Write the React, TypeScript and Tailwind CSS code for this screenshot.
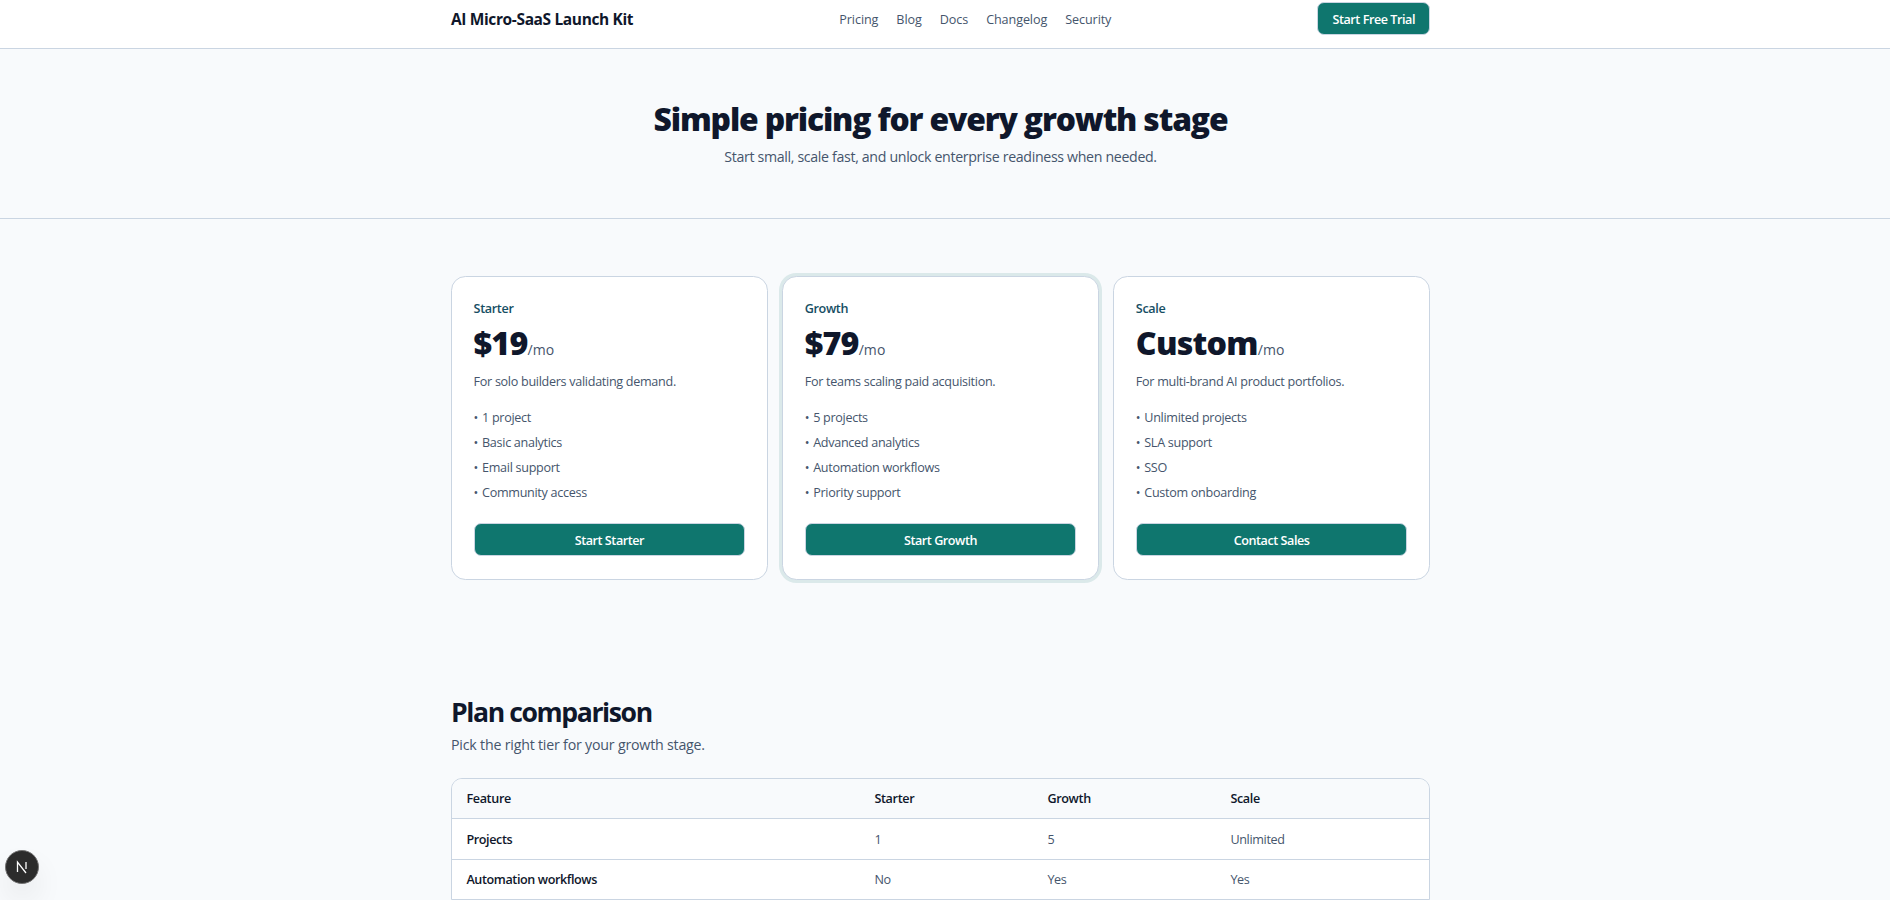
import clsx from "clsx";

const navLinks = ["Pricing", "Blog", "Docs", "Changelog", "Security"];

type Plan = {
  name: string;
  price: string;
  description: string;
  features: string[];
  cta: string;
  featured?: boolean;
};

const plans: Plan[] = [
  {
    name: "Starter",
    price: "$19",
    description: "For solo builders validating demand.",
    features: ["1 project", "Basic analytics", "Email support", "Community access"],
    cta: "Start Starter",
  },
  {
    name: "Growth",
    price: "$79",
    description: "For teams scaling paid acquisition.",
    features: ["5 projects", "Advanced analytics", "Automation workflows", "Priority support"],
    cta: "Start Growth",
    featured: true,
  },
  {
    name: "Scale",
    price: "Custom",
    description: "For multi-brand AI product portfolios.",
    features: ["Unlimited projects", "SLA support", "SSO", "Custom onboarding"],
    cta: "Contact Sales",
  },
];

const rows = [
  ["Projects", "1", "5", "Unlimited"],
  ["Automation workflows", "No", "Yes", "Yes"],
];

function PlanCard({ plan }: { plan: Plan }) {
  return (
    <article
      className={clsx(
        "rounded-[14.4px] border border-slate-300 bg-white px-6 pt-[23px] pb-[23px]",
        plan.featured && "ring-3 ring-[#0f766e]/12"
      )}
    >
      <p className="text-[12.6px] leading-[18px] font-semibold tracking-[-0.35px] text-[#164e63]">{plan.name}</p>
      <p className="mt-[7px] h-[36px] text-[32.2px] leading-[35px] font-extrabold tracking-[-0.8px] text-slate-900">
        {plan.price}
        <span className="text-[14px] font-medium tracking-[0.1px] text-slate-600">/mo</span>
      </p>
      <p className="mt-[12px] text-[12.6px] leading-[18px] tracking-[-0.3px] text-slate-600">{plan.description}</p>
      <ul className="mt-[18px] space-y-[7px] text-[12.6px] leading-[18px] tracking-[-0.3px] text-slate-600">
        {plan.features.map((f) => (
          <li key={f}>
            <span className="mr-px">•</span> {f}
          </li>
        ))}
      </ul>
      <button className="mt-[21px] block h-[33px] w-full rounded-[7px] border border-slate-300 bg-[#0f766e] pt-[2px] text-[12.6px] leading-[18px] font-semibold tracking-[-0.45px] text-white">
        {plan.cta}
      </button>
    </article>
  );
}

export default function App() {
  return (
    <div className="h-[900px] overflow-hidden bg-slate-50 font-['Open_Sans','Noto_Sans',sans-serif] text-slate-900 [--spacing:3.6px]">
      <header className="h-[49px] border-b border-slate-300 bg-white pr-[9px]">
        <div className="mx-auto flex h-[38px] w-[979px] items-center justify-between">
          <span className="pt-[2px] text-[15.5px] font-bold tracking-[-0.37px]">AI Micro-SaaS Launch Kit</span>
          <nav className="flex gap-5 pt-[2px] text-[12.6px] font-medium tracking-[-0.09px] text-slate-600">
            {navLinks.map((l) => (
              <a key={l}>{l}</a>
            ))}
          </nav>
          <button className="-mt-px h-[33px] w-[112.5px] rounded-[7px] border border-slate-300 bg-[#0f766e] pt-[2px] text-[12.6px] leading-[18px] font-semibold tracking-[-0.45px] text-white">
            Start Free Trial
          </button>
        </div>
      </header>

      <section className="h-[170px] border-b border-slate-300 pt-14 pr-[9px] text-center">
        <h1 className="text-[31.8px] leading-[39.6px] font-extrabold tracking-[-1.15px]">
          Simple pricing for every growth stage
        </h1>
        <p className="mt-2 text-[14.2px] leading-[21.6px] tracking-[-0.34px] text-slate-600">
          Start small, scale fast, and unlock enterprise readiness when needed.
        </p>
      </section>

      <section className="pt-[57px] pb-16 pr-[9px]">
        <div className="mx-auto grid w-[979px] grid-cols-3 gap-4">
          {plans.map((p) => (
            <PlanCard key={p.name} plan={p} />
          ))}
        </div>
      </section>

      <section className="pt-[58.6px] pr-[9px]">
        <div className="mx-auto w-[979px]">
          <h2 className="text-[26.6px] leading-[32.4px] font-bold tracking-[-1.4px]">Plan comparison</h2>
          <p className="mt-[5.2px] text-[14.2px] leading-[21.6px] tracking-[-0.2px] text-slate-600">
            Pick the right tier for your growth stage.
          </p>
          <div className="mt-[22.6px] overflow-hidden rounded-t-[11px] border border-slate-300 bg-white">
            <table className="w-full table-fixed border-separate border-spacing-0 text-left text-[12.6px] leading-[18px] tracking-[-0.35px]">
              <thead className="bg-slate-50">
                <tr>
                  <th className="h-[39px] w-[408px] px-4 pt-[2px] font-semibold">Feature</th>
                  <th className="w-[173px] px-4 pt-[2px] font-semibold">Starter</th>
                  <th className="w-[183px] px-4 pt-[2px] font-semibold">Growth</th>
                  <th className="px-4 pt-[2px] font-semibold">Scale</th>
                </tr>
              </thead>
              <tbody>
                {rows.map(([label, ...cells]) => (
                  <tr key={label} className="h-[41px] last:h-[40px]">
                    <td className="border-t border-slate-300 px-4 pt-[2px] font-semibold tracking-[-0.4px]">{label}</td>
                    {cells.map((c, i) => (
                      <td key={i} className="border-t border-slate-300 px-4 pt-[2px] text-slate-600">
                        {c}
                      </td>
                    ))}
                  </tr>
                ))}
              </tbody>
            </table>
          </div>
        </div>
      </section>

      <div className="fixed bottom-[16px] left-[5px] flex size-[34px] items-center justify-center rounded-full border border-neutral-500 bg-[#2c2c2c] shadow-[0_16px_32px_-8px_rgba(0,0,0,0.24)]">
        <svg width="14" height="14" viewBox="0 0 14 14" fill="none" stroke="white" strokeWidth="1.3">
          <path d="M2.5 12V2.2L11 13" />
          <path d="M11 2V9" />
        </svg>
      </div>
    </div>
  );
}
